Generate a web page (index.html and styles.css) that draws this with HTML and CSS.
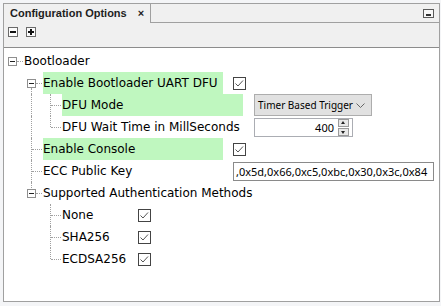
FILE: index.html
```html
<!DOCTYPE html>
<html>
	<head>
		<link rel="stylesheet" href="styles.css">
	</head>
	<body>
		<div class="panel">
			<div class="tabstrip">
				<div class="tab">Configuration Options <span class="close">×</span></div>
				<div class="strip-rest">
					<svg class="minimize" width="11" height="9" viewBox="0 0 11 9">
						<rect x="0.5" y="0.5" width="10" height="8" fill="#f7f7f7" stroke="#5a5a5a"/>
						<rect x="3" y="5" width="5" height="2" fill="#333"/>
					</svg>
				</div>
			</div>
			<div class="toolbar">
				<button class="tool-btn minus" title="Collapse all"></button>
				<button class="tool-btn plus" title="Expand all"></button>
			</div>
			<div class="tree">
				<div class="row">
					<span class="guide node"><span class="box"></span></span>
					<span class="label">Bootloader</span>
				</div>
				<div class="row">
					<span class="guide"></span>
					<span class="guide node down"><span class="box"></span></span>
					<span class="label hl w1">Enable Bootloader UART DFU</span>
					<span class="value gap10"><svg class="check" width="13" height="13" viewBox="0 0 13 13"><rect x="0.5" y="0.5" width="12" height="12" fill="#fff" stroke="#444"/><path d="M2.5 6.5 L5 9 L10 3.5" fill="none" stroke="#555"/></svg></span>
				</div>
				<div class="row">
					<span class="guide"></span>
					<span class="guide v"></span>
					<span class="guide t"></span>
					<span class="label hl w2">DFU Mode</span>
					<span class="value gap11">
						<span class="combo">Timer Based Trigger
							<svg width="9" height="5" viewBox="0 0 9 5"><path d="M0.5 0.5 L4.5 4.5 L8.5 0.5" fill="none" stroke="#666"/></svg>
						</span>
					</span>
				</div>
				<div class="row">
					<span class="guide"></span>
					<span class="guide v"></span>
					<span class="guide l"></span>
					<span class="label w2">DFU Wait Time in MillSeconds</span>
					<span class="value gap11">
						<span class="spinner">
							<span class="spin-text">400</span>
							<span class="spin-btns">
								<span class="spin up"></span>
								<span class="spin down"></span>
							</span>
						</span>
					</span>
				</div>
				<div class="row">
					<span class="guide"></span>
					<span class="guide t"></span>
					<span class="label hl w1">Enable Console</span>
					<span class="value gap10"><svg class="check" width="13" height="13" viewBox="0 0 13 13"><rect x="0.5" y="0.5" width="12" height="12" fill="#fff" stroke="#444"/><path d="M2.5 6.5 L5 9 L10 3.5" fill="none" stroke="#555"/></svg></span>
				</div>
				<div class="row">
					<span class="guide"></span>
					<span class="guide t"></span>
					<span class="label w1">ECC Public Key</span>
					<span class="value gap10"><span class="textfield">,0x5d,0x66,0xc5,0xbc,0x30,0x3c,0x84</span></span>
				</div>
				<div class="row">
					<span class="guide"></span>
					<span class="guide node up"><span class="box"></span></span>
					<span class="label">Supported Authentication Methods</span>
				</div>
				<div class="row">
					<span class="guide"></span>
					<span class="guide"></span>
					<span class="guide t"></span>
					<span class="label w3">None</span>
					<span class="value gap10"><svg class="check" width="13" height="13" viewBox="0 0 13 13"><rect x="0.5" y="0.5" width="12" height="12" fill="#fff" stroke="#444"/><path d="M2.5 6.5 L5 9 L10 3.5" fill="none" stroke="#555"/></svg></span>
				</div>
				<div class="row">
					<span class="guide"></span>
					<span class="guide"></span>
					<span class="guide t"></span>
					<span class="label w3">SHA256</span>
					<span class="value gap10"><svg class="check" width="13" height="13" viewBox="0 0 13 13"><rect x="0.5" y="0.5" width="12" height="12" fill="#fff" stroke="#444"/><path d="M2.5 6.5 L5 9 L10 3.5" fill="none" stroke="#555"/></svg></span>
				</div>
				<div class="row">
					<span class="guide"></span>
					<span class="guide"></span>
					<span class="guide l"></span>
					<span class="label w3">ECDSA256</span>
					<span class="value gap10"><svg class="check" width="13" height="13" viewBox="0 0 13 13"><rect x="0.5" y="0.5" width="12" height="12" fill="#fff" stroke="#444"/><path d="M2.5 6.5 L5 9 L10 3.5" fill="none" stroke="#555"/></svg></span>
				</div>
			</div>
		</div>
	</body>
</html>
```

FILE: styles.css
```css
:root {
	--panel-bg: #f0f0f0;
	--border: #a0a0a0;
	--line: #a0a0a0;
	--highlight: #bff7bf;
}
html, body {
	margin: 0;
	width: 100%;
	height: 100%;
	background: #f4f5f7;
}
body {
	font-family: "DejaVu Sans", sans-serif;
	font-size: 12px;
	color: #000;
}

.panel {
	margin: 3px 1px 4px 3px;
	height: 297px;
	border: 1px solid var(--border);
	display: flex;
	flex-direction: column;
	background: var(--panel-bg);
}

.tabstrip {
	display: flex;
	height: 19px;
}
.tab {
	padding-left: 6px;
	width: 140px;
	border-right: 1px solid var(--border);
	font-family: "Liberation Sans", sans-serif;
	font-weight: bold;
	font-size: 11px;
	line-height: 18px;
	color: #1e1e1e;
}
.tab .close {
	margin-left: 8px;
	font-size: 11px;
}
.strip-rest {
	flex: 1;
	display: flex;
	justify-content: flex-end;
	align-items: flex-start;
	padding: 5px 5px 0 0;
	border-bottom: 1px solid var(--border);
}

.toolbar {
	height: 25px;
	display: flex;
	align-items: flex-start;
	gap: 8px;
	padding: 4px 0 0 4px;
	box-sizing: border-box;
	border-bottom: 1px solid #8c8c8c;
}
.tool-btn {
	width: 10px;
	height: 10px;
	padding: 0;
	border: 1px solid #6a6a6a;
	background: #fbfbfb;
	position: relative;
}
.tool-btn::before {
	content: "";
	position: absolute;
	left: 1px;
	top: 3px;
	width: 6px;
	height: 2px;
	background: #111;
}
.tool-btn.plus::after {
	content: "";
	position: absolute;
	left: 3px;
	top: 1px;
	width: 2px;
	height: 6px;
	background: #111;
}

.tree {
	flex: 1;
	background: #fff;
	padding-top: 2px;
}
.row {
	display: flex;
	align-items: center;
	height: 22px;
}

.guide {
	flex: none;
	width: 19px;
	height: 22px;
	position: relative;
}
.guide.v::before,
.guide.t::before,
.guide.l::before,
.guide.down::before,
.guide.up::before {
	content: "";
	position: absolute;
	left: 8px;
	top: 0;
	bottom: 0;
	border-left: 1px dotted var(--line);
}
.guide.l::before {
	bottom: 11px;
}
.guide.down::before {
	top: 16px;
}
.guide.up::before {
	bottom: 16px;
}
.guide.t::after,
.guide.l::after,
.guide.node::after {
	content: "";
	position: absolute;
	left: 9px;
	right: 0;
	top: 11px;
	border-top: 1px dotted var(--line);
}
.guide.node::after {
	left: 13px;
}
.box {
	position: absolute;
	left: 4px;
	top: 7px;
	width: 7px;
	height: 7px;
	border: 1px solid #8f8f8f;
	background: #fff;
	z-index: 1;
}
.box::after {
	content: "";
	position: absolute;
	left: 1px;
	top: 3px;
	width: 5px;
	height: 1px;
	background: #222;
}

.label {
	margin-left: 1px;
	height: 22px;
	line-height: 23px;
	white-space: nowrap;
	flex: none;
}
.label.hl {
	background: var(--highlight);
}
.w1 { width: 180px; }
.w2 { width: 181px; }
.w3 { width: 66px; }

.value {
	display: flex;
	align-items: center;
}
.gap10 { margin-left: 10px; }
.gap11 { margin-left: 11px; }

.check {
	display: block;
}

.combo {
	width: 118px;
	height: 22px;
	box-sizing: border-box;
	border: 1px solid #adadad;
	background: #e1e1e1;
	display: flex;
	align-items: center;
	justify-content: space-between;
	padding: 0 6px 0 3px;
	font-family: "Noto Sans", sans-serif;
	font-size: 10px;
	white-space: nowrap;
	color: #000;
}

.spinner {
	width: 99px;
	height: 19px;
	box-sizing: border-box;
	border: 1px solid #abadb3;
	background: #fff;
	display: flex;
	align-items: center;
	justify-content: flex-end;
	padding-right: 3px;
	font-family: "Noto Sans", sans-serif;
	font-size: 11px;
}
.spin-text {
	margin-right: 4px;
}
.spin-btns {
	display: flex;
	flex-direction: column;
	gap: 1px;
}
.spin {
	width: 9px;
	height: 6px;
	border: 1px solid #9a9a9a;
	background: #e8e8e8;
	position: relative;
}
.spin::after {
	content: "";
	position: absolute;
	left: 2px;
	border-left: 2.5px solid transparent;
	border-right: 2.5px solid transparent;
}
.spin.up::after {
	top: 1px;
	border-bottom: 3px solid #222;
}
.spin.down::after {
	top: 2px;
	border-top: 3px solid #222;
}

.textfield {
	width: 201px;
	height: 19px;
	box-sizing: border-box;
	border: 1px solid #8a8a8a;
	padding-left: 2px;
	font-family: "Noto Sans", sans-serif;
	font-size: 11px;
	line-height: 17px;
	white-space: nowrap;
	overflow: hidden;
}
```
